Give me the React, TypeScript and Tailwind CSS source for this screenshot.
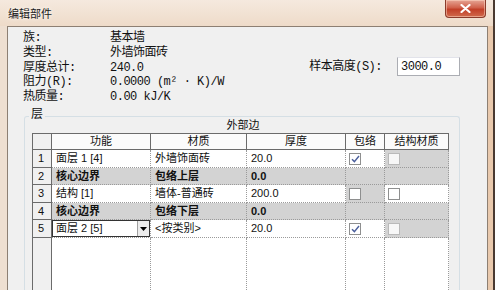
import React from "react";

const cjk = "font-['Liberation_Mono','Noto_Sans_CJK_SC',monospace]";
const tbl = "font-['Liberation_Sans','Noto_Sans_CJK_SC',sans-serif]";

function Check({ checked, disabled }: { checked?: boolean; disabled?: boolean }) {
  return (
    <span
      className={
        "flex h-[12px] w-[12px] items-center justify-center border " +
        (disabled ? "border-[#b9b9b9] bg-[#f7f7f7]" : "border-[#8e8f8f] bg-white")
      }
    >
      {checked && (
        <svg width="9" height="8" viewBox="0 0 9 8">
          <path d="M1 4.2 L3.4 6.6 L8 1" fill="none" stroke="#4b5f9c" strokeWidth="1.4" />
        </svg>
      )}
    </span>
  );
}

type Row = {
  n: string;
  fn: string;
  mat: string;
  th: string;
  core?: boolean;
  wrap?: "checked" | "empty";
  wrapGray?: boolean;
  struct?: boolean;
  structGray?: boolean;
  combo?: boolean;
  h: string;
};

const rows: Row[] = [
  { n: "1", fn: "面层 1 [4]", mat: "外墙饰面砖", th: "20.0", wrap: "checked", struct: true, structGray: true, h: "h-[18px]" },
  { n: "2", fn: "核心边界", mat: "包络上层", th: "0.0", core: true, h: "h-[17px]" },
  { n: "3", fn: "结构 [1]", mat: "墙体-普通砖", th: "200.0", wrap: "empty", wrapGray: true, struct: true, h: "h-[18px]" },
  { n: "4", fn: "核心边界", mat: "包络下层", th: "0.0", core: true, h: "h-[17px]" },
  { n: "5", fn: "面层 2 [5]", mat: "<按类别>", th: "20.0", wrap: "checked", struct: true, structGray: true, combo: true, h: "h-[18px]" },
];

const info: [string, string, string][] = [
  ["族:", "基本墙", "h-[16px]"],
  ["类型:", "外墙饰面砖", "h-[15px]"],
  ["厚度总计:", "240.0", "h-[14px]"],
  ["阻力(R):", "0.0000 (m² · K)/W", "h-[15px]"],
  ["热质量:", "0.00 kJ/K", "h-[15px]"],
];

const dot = "border-r border-b border-dotted border-[#9a9a9a]";

export default function App() {
  return (
    <div className="flex h-[290px] w-[495px] flex-col overflow-hidden bg-[#ebd6c3]">
      {/* title bar */}
      <div className="flex h-[26px] shrink-0 items-start bg-[linear-gradient(#f5e9de,#eedbc9)]">
        <div className={"pl-[8px] pt-[6px] text-[11px] leading-[14px] text-[#1b1b1b] font-['Noto_Sans_CJK_SC',sans-serif] [text-shadow:0_0_4px_#fff]"}>
          编辑部件
        </div>
        <div className="ml-auto mr-[7px] flex h-[18px] w-[41px] items-center justify-center rounded-b-[4px] border border-t-0 border-[#8b3b2b] bg-[linear-gradient(#e6a595,#d0614b_45%,#c13f28_55%,#d06a4c)] shadow-[inset_0_0_0_1px_rgba(255,220,200,0.5)]">
          <svg width="11" height="9" viewBox="0 0 11 9">
            <path d="M1.5 1 L9.5 8 M9.5 1 L1.5 8" stroke="#fff" strokeWidth="2.2" strokeLinecap="round" />
          </svg>
        </div>
        <div className="w-[2px] self-stretch bg-[#4a3a31]" />
      </div>

      {/* body */}
      <div className="flex flex-1">
        <div className="w-[7px] bg-[#eedfd1]" />
        <div className="flex flex-1 flex-col border border-b-0 border-[#8d7f73] bg-[#f0f0f0]">
          {/* info */}
          <div className="flex">
            <div className={"ml-[15px] pt-[3px] text-[12px] tracking-[-0.5px] text-[#111] " + cjk}>
              {info.map(([a, b, h]) => (
                <div key={a} className={"flex items-center leading-[15px] " + h}>
                  <span className="w-[87px]">{a}</span>
                  <span>{b}</span>
                </div>
              ))}
            </div>
            <div className={"ml-auto mr-[27px] mt-[30px] flex h-[19px] items-center text-[12px] tracking-[-0.5px] text-[#111] " + cjk}>
              <span className="mr-[15px]">样本高度(S):</span>
              <div className="flex h-[19px] w-[63px] items-center border border-[#abadb3] border-t-[#e2e3ea] bg-white pl-[3px]">
                3000.0
              </div>
            </div>
          </div>

          {/* group box */}
          <div className="relative ml-[16px] mt-[11px] w-[436px] flex-1 rounded-t-[3px] border border-b-0 border-[#d5dfe5]">
            <span className={"absolute left-[4px] top-[-9px] bg-[#f0f0f0] px-[2px] text-[12px] leading-[14px] text-[#111] " + cjk}>
              层
            </span>
            <div className={"pt-[1px] text-center text-[11px] leading-[15px] text-[#111] " + tbl}>
              <span className="pl-[2px]">外部边</span>
            </div>
            <div className={"ml-[7px] w-[417px] border-l border-t border-[#6b6b6b] text-[11px] text-[#111] " + tbl}>
              {/* header */}
              <div className="flex h-[16px] border-b border-[#6b6b6b] bg-[#fbfbfb] leading-[15px]">
                <div className="w-[19px] border-r border-[#6b6b6b] bg-[#f0f0f0]" />
                <div className="w-[99px] border-r border-[#6b6b6b] text-center">功能</div>
                <div className="w-[96px] border-r border-[#6b6b6b] text-center">材质</div>
                <div className="w-[99px] border-r border-[#6b6b6b] text-center">厚度</div>
                <div className="w-[39px] border-r border-[#6b6b6b] text-center">包络</div>
                <div className="w-[64px] border-r border-[#6b6b6b] text-center">结构材质</div>
              </div>
              {rows.map((r) => (
                <div key={r.n} className={"flex " + r.h + (r.core ? " font-bold" : "")}>
                  <div className="flex w-[19px] items-center border-b border-r border-[#6b6b6b] bg-[#f0f0f0] pl-[5px] font-normal">
                    {r.n}
                  </div>
                  {r.combo ? (
                    <div className={"w-[99px] bg-white " + dot}>
                      <div className="flex h-full border border-[#333] border-r-[#333]">
                        <span className="flex flex-1 items-center pl-[3px]">{r.fn}</span>
                        <span className="flex w-[12px] items-center justify-center border-l border-[#a0a0a0] bg-[#ececec]">
                          <svg width="7" height="4" viewBox="0 0 7 4">
                            <path d="M0 0 H7 L3.5 4 Z" fill="#000" />
                          </svg>
                        </span>
                      </div>
                    </div>
                  ) : (
                    <div className={"flex w-[99px] items-center pl-[4px] " + dot + (r.core ? " bg-[#d3d3d3]" : " bg-white")}>
                      {r.fn}
                    </div>
                  )}
                  <div className={"flex w-[96px] items-center pl-[4px] " + dot + (r.core ? " bg-[#d3d3d3]" : " bg-white")}>
                    {r.mat}
                  </div>
                  <div className={"flex w-[99px] items-center pl-[4px] " + dot + (r.core ? " bg-[#d3d3d3]" : " bg-white")}>
                    {r.th}
                  </div>
                  <div className={"flex w-[39px] items-center pl-[3px] " + dot + (r.core || r.wrapGray ? " bg-[#d3d3d3]" : " bg-white")}>
                    {r.wrap && <Check checked={r.wrap === "checked"} />}
                  </div>
                  <div className={"flex w-[64px] items-center pl-[3px] " + dot + (r.core || r.structGray ? " bg-[#d3d3d3]" : " bg-white")}>
                    {r.struct && <Check disabled={r.structGray} />}
                  </div>
                </div>
              ))}
              {/* empty area */}
              <div className="flex h-[60px]">
                <div className="w-[19px] border-r border-[#6b6b6b] bg-[#f0f0f0]" />
                <div className="w-[99px] border-r border-dotted border-[#9a9a9a] bg-white" />
                <div className="w-[96px] border-r border-dotted border-[#9a9a9a] bg-white" />
                <div className="w-[99px] border-r border-dotted border-[#9a9a9a] bg-white" />
                <div className="w-[39px] border-r border-dotted border-[#9a9a9a] bg-white" />
                <div className="w-[64px] border-r border-dotted border-[#9a9a9a] bg-white" />
              </div>
            </div>
          </div>
        </div>
        <div className="w-[5px] bg-[#e9c9ad]" />
        <div className="w-[2px] bg-[#4a3a31]" />
      </div>
    </div>
  );
}
